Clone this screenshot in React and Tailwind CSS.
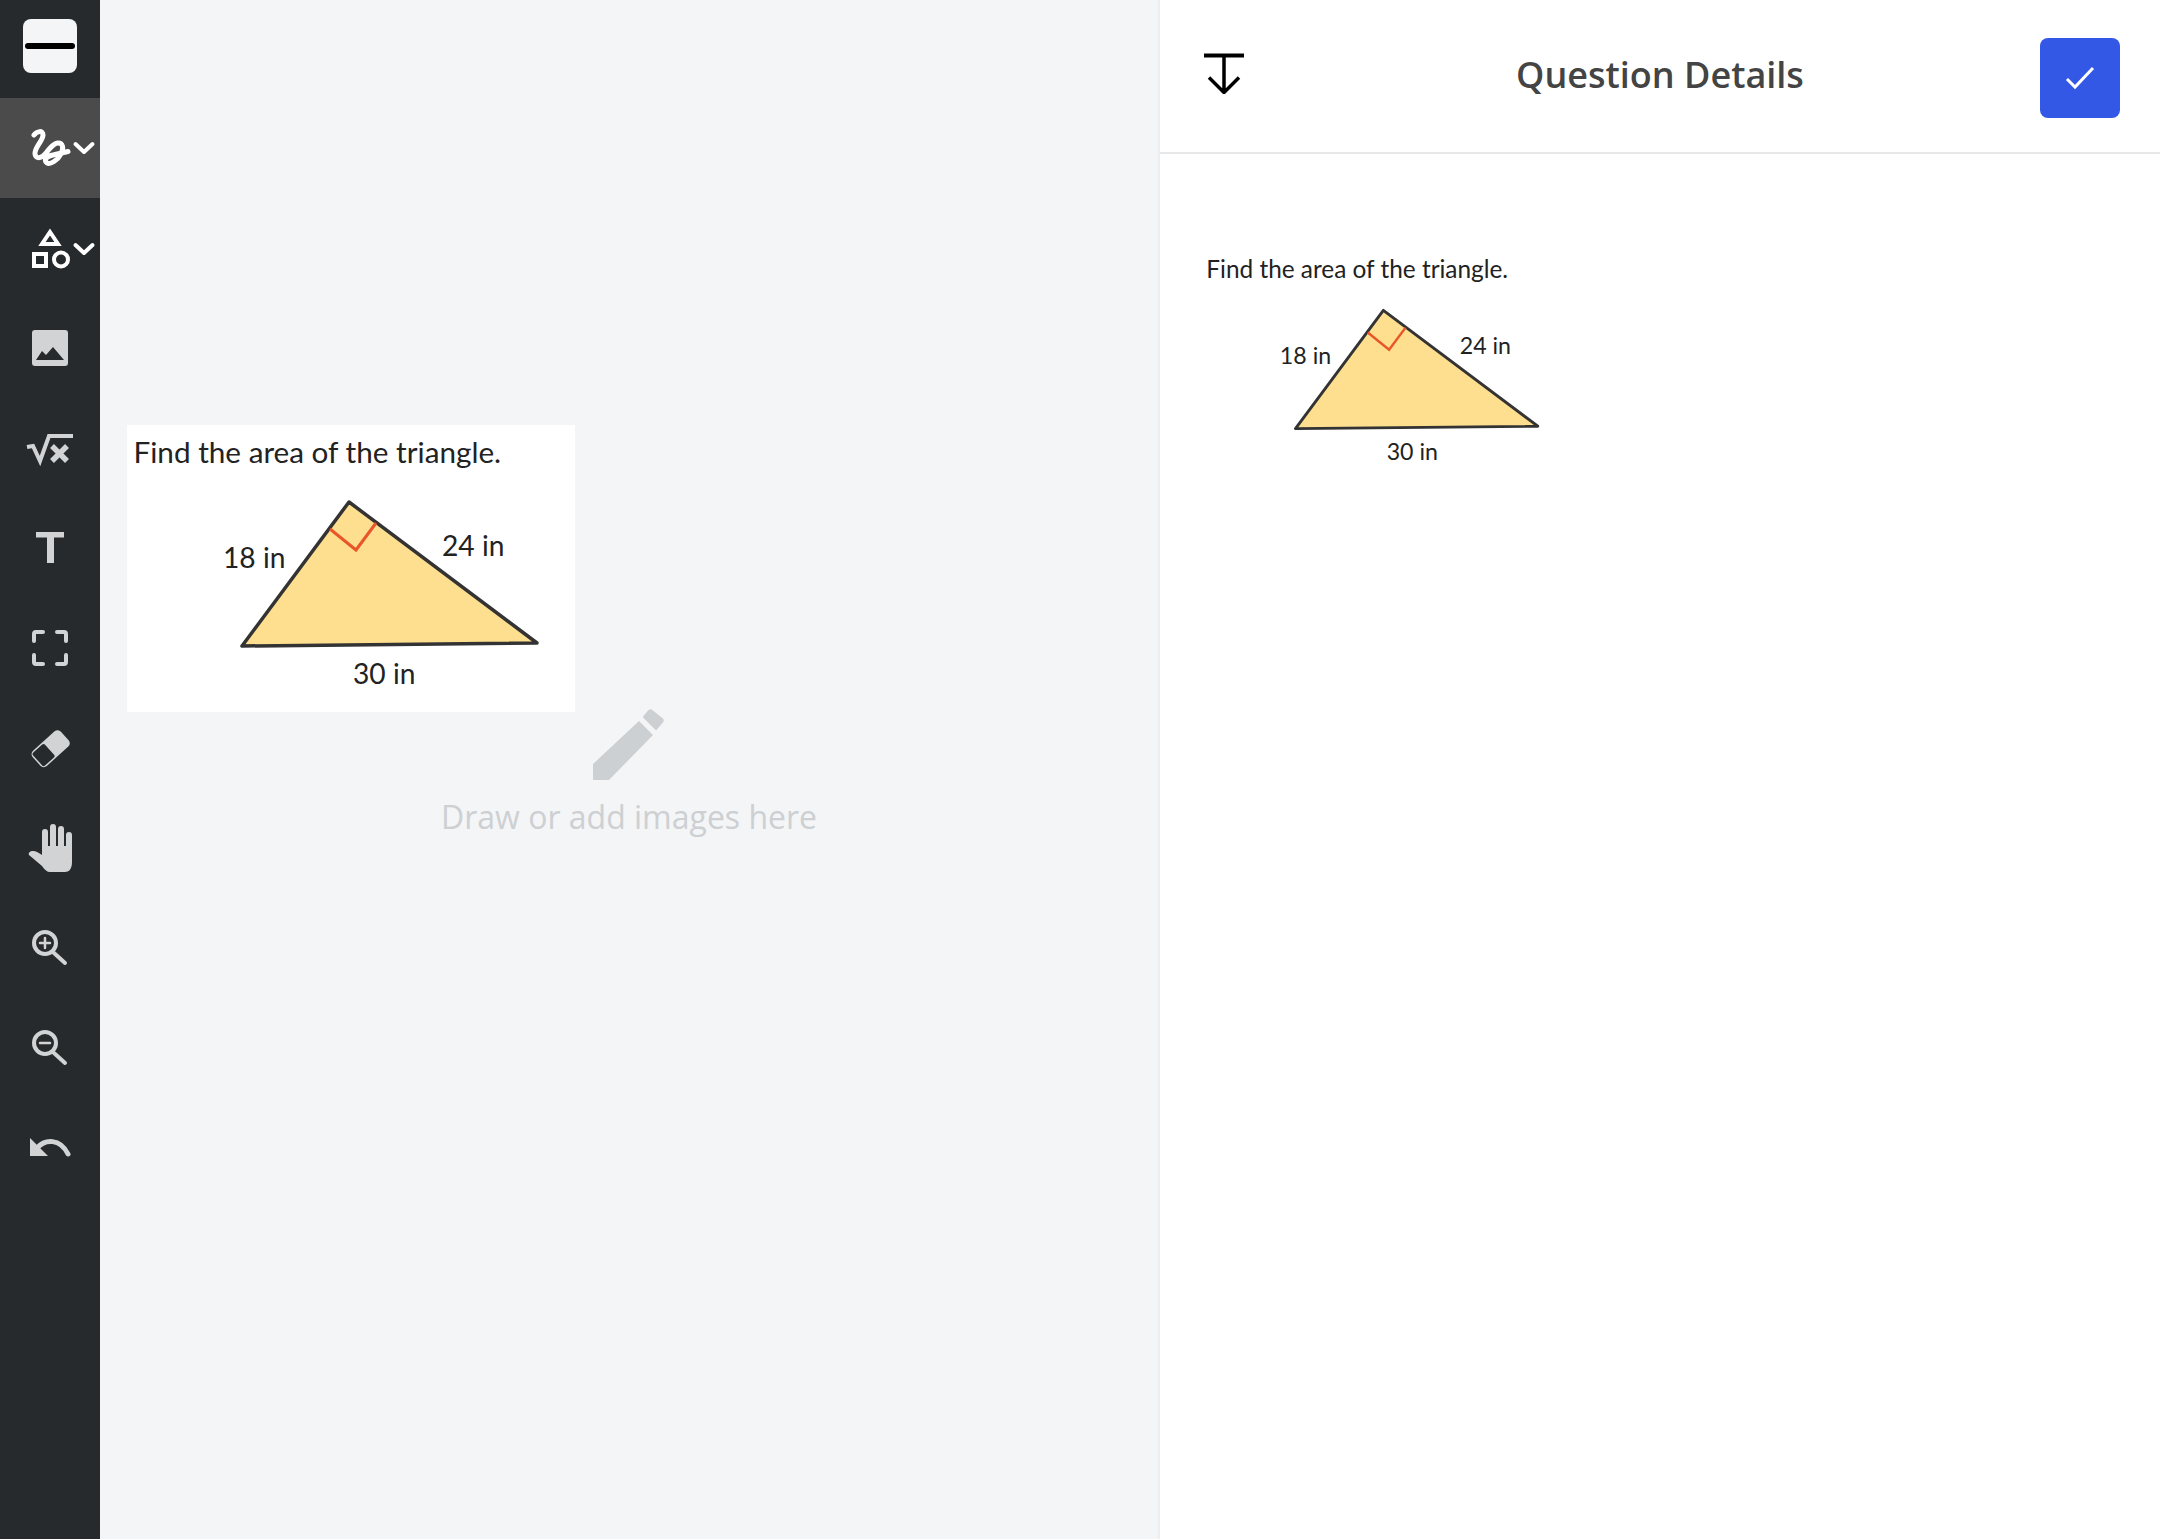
import React from 'react';

const grey = '#d1d3d4';

function Chevron({ y }) {
  return <path d={`M75.500 ${y} L84 ${y + 8} L92.500 ${y}`} fill="none" stroke="#fff" strokeWidth="4" strokeLinecap="round" strokeLinejoin="round" />;
}

// each icon keeps page coordinates, the viewBox moves down with the row
const tools = [
  {
    top: 98,
    active: true,
    icon: (
      <>
        <path d="M34 135 C37 131 43 130 43 135 C43 141 34 148 35 154 C36 160 42 158 46 153 C50 148 54 143 58 143 C63 143 64 148 61 154 C58 160 50 165 47 163 C43 160 47 156 53 155 L68 151.500" fill="none" stroke="#fff" strokeWidth="5" strokeLinecap="round" strokeLinejoin="round" />
        <Chevron y={144} />
      </>
    ),
  },
  {
    top: 198,
    icon: (
      <>
        <path d="M50 232 L58 244 H42 Z" fill="none" stroke="#fff" strokeWidth="4" />
        <rect x="34" y="254" width="12" height="12" fill="none" stroke="#fff" strokeWidth="4" />
        <circle cx="61" cy="259.500" r="7" fill="none" stroke="#fff" strokeWidth="4" />
        <Chevron y={245} />
      </>
    ),
  },
  {
    top: 298,
    icon: (
      <>
        <rect x="32" y="330" width="36" height="36" rx="3" fill={grey} />
        <path d="M36 360 L42 351 L46 355 L53 347 L64 360 Z" fill="#272a2d" />
      </>
    ),
  },
  {
    top: 398,
    icon: (
      <>
        <path d="M27 447 L33 446 L40 461 L49 436 H73" fill="none" stroke={grey} strokeWidth="4" />
        <path d="M52 446 L67 461 M67 446 L52 461" fill="none" stroke={grey} strokeWidth="5.500" />
      </>
    ),
  },
  {
    top: 498,
    icon: <path d="M36 532 H64 V537.500 H54 V563 H47 V537.500 H36 Z" fill={grey} />,
  },
  {
    top: 598,
    icon: (
      <path d="M43 632 H36 Q34 632 34 634 V641 M57 632 H64 Q66 632 66 634 V641 M34 655 V662 Q34 664 36 664 H43 M66 655 V662 Q66 664 64 664 H57" fill="none" stroke={grey} strokeWidth="4" strokeLinecap="round" />
    ),
  },
  {
    top: 698,
    icon: (
      <g transform="rotate(-42 50.500 748.500)">
        <rect x="33" y="740" width="35" height="17.500" rx="3" fill={grey} stroke={grey} strokeWidth="3" />
        <rect x="33" y="740" width="16" height="17.500" rx="2" fill="#272a2d" />
      </g>
    ),
  },
  {
    top: 798,
    icon: (
      <>
        <path d="M45 850 V832 M53 850 V827 M61 850 V829 M69 852 V835" fill="none" stroke={grey} strokeWidth="6" strokeLinecap="round" />
        <path d="M42 846 H72 V862 C72 869 69 872 65 872 H50 C47 872 45 870 42 866 L29 855 C28 853 30 851 33 851 C36 851 39 853 42 855 Z" fill={grey} />
      </>
    ),
  },
  {
    top: 898,
    icon: (
      <>
        <circle cx="45" cy="943" r="11" fill="none" stroke={grey} strokeWidth="4" />
        <path d="M54 953 L65 963" stroke={grey} strokeWidth="4" strokeLinecap="round" />
        <path d="M40 943 H50 M45 938 V948" stroke={grey} strokeWidth="2.500" strokeLinecap="round" />
      </>
    ),
  },
  {
    top: 998,
    icon: (
      <>
        <circle cx="45" cy="1043" r="11" fill="none" stroke={grey} strokeWidth="4" />
        <path d="M54 1053 L65 1063" stroke={grey} strokeWidth="4" strokeLinecap="round" />
        <path d="M40 1043 H50" stroke={grey} strokeWidth="2.500" strokeLinecap="round" />
      </>
    ),
  },
  {
    top: 1098,
    icon: (
      <>
        <path d="M30 1138 V1156 H48 Z" fill={grey} />
        <path d="M37 1148 C45 1139 60 1138 68 1154" fill="none" stroke={grey} strokeWidth="5" strokeLinecap="round" />
      </>
    ),
  },
];

function QuestionImage({ className }) {
  const labelClass = 'fill-[#222]';
  return (
    <svg viewBox="0 0 448 287" className={className} style={{ fontFamily: 'Lato, sans-serif' }}>
      <text x="6.500" y="38" fontSize="29.700" className={labelClass}>Find the area of the triangle.</text>
      <path d="M222 77 L115 221 L410 218 Z" fill="#fddf8f" stroke="#333" strokeWidth="3.500" strokeLinejoin="round" />
      <path d="M203 104 L229 125 L249 98" fill="none" stroke="#e8562a" strokeWidth="3" />
      <text x="96" y="142.500" fontSize="28.200" className={labelClass}>18 in</text>
      <text x="315" y="130.500" fontSize="28.200" className={labelClass}>24 in</text>
      <text x="226" y="259" fontSize="28.200" className={labelClass}>30 in</text>
    </svg>
  );
}

export default function App() {
  return (
    <div className="flex h-[1539px] w-[2160px] overflow-hidden bg-white font-['Open_Sans',sans-serif]">
      <aside className="w-[100px] shrink-0 bg-[#272a2d]">
        <div className="flex h-[98px] items-start justify-center pt-[19px]">
          <button className="flex h-[54px] w-[54px] items-center justify-center rounded-lg bg-[#f4f5f7]">
            <span className="h-[6px] w-[50px] rounded-full bg-black" />
          </button>
        </div>
        {tools.map((t) => (
          <div key={t.top} className={`h-[100px] ${t.active ? 'bg-[#4b4b4b]' : ''}`}>
            <svg viewBox={`0 ${t.top} 100 100`} className="block h-[100px] w-[100px]">{t.icon}</svg>
          </div>
        ))}
      </aside>

      <main className="relative flex flex-1 items-center justify-center bg-[#f4f5f7]">
        <div className="absolute left-[27px] top-[425px] h-[287px] w-[448px] bg-white">
          <QuestionImage className="block h-[287px] w-[448px]" />
        </div>
        <div className="flex flex-col items-center pt-[7px]">
          <svg viewBox="-1 0 73 73" className="block h-[73px] w-[73px]">
            <path d="M0 73 V57 L46 14 L60 28 L16 73 Z" fill="#cdd0d2" />
            <path d="M51 10 L56 4 Q57.500 2.500 59 4 L69 12 Q70.500 13.500 69 15 L63 22 Z" fill="#cdd0d2" stroke="#cdd0d2" strokeWidth="2" strokeLinejoin="round" />
          </svg>
          <p className="mt-[15px] text-[32px] leading-[44px] text-[#cdd0d2]">Draw or add images here</p>
        </div>
      </main>

      <section className="flex w-[1002px] shrink-0 flex-col border-l-2 border-[#eceef0] bg-white">
        <header className="grid h-[154px] shrink-0 grid-cols-[1fr_auto_1fr] items-start border-b-2 border-[#e5e7e9] pl-[40px] pr-[40px] pt-[38px]">
          <svg viewBox="0 0 40 40" className="ml-[4px] mt-[15px] h-[41px] w-[40px]">
            <path d="M0 2 H40" stroke="#000" strokeWidth="4" />
            <path d="M20 2 V38 M5 24 L20 39 L35 24" fill="none" stroke="#000" strokeWidth="3.500" />
          </svg>
          <h1 className="mt-[19px] text-[36px] font-semibold leading-none text-[#444]">Question Details</h1>
          <button className="flex h-[80px] w-[80px] items-center justify-center justify-self-end rounded-lg bg-[#3358e5]">
            <svg viewBox="0 0 40 40" className="h-[40px] w-[40px]">
              <path d="M7 21 L15 29 L33 10" fill="none" stroke="#fff" strokeWidth="3" />
            </svg>
          </button>
        </header>
        <div className="pl-[41px] pt-[93px]">
          <QuestionImage className="block h-[236px] w-[368px]" />
        </div>
      </section>
    </div>
  );
}
